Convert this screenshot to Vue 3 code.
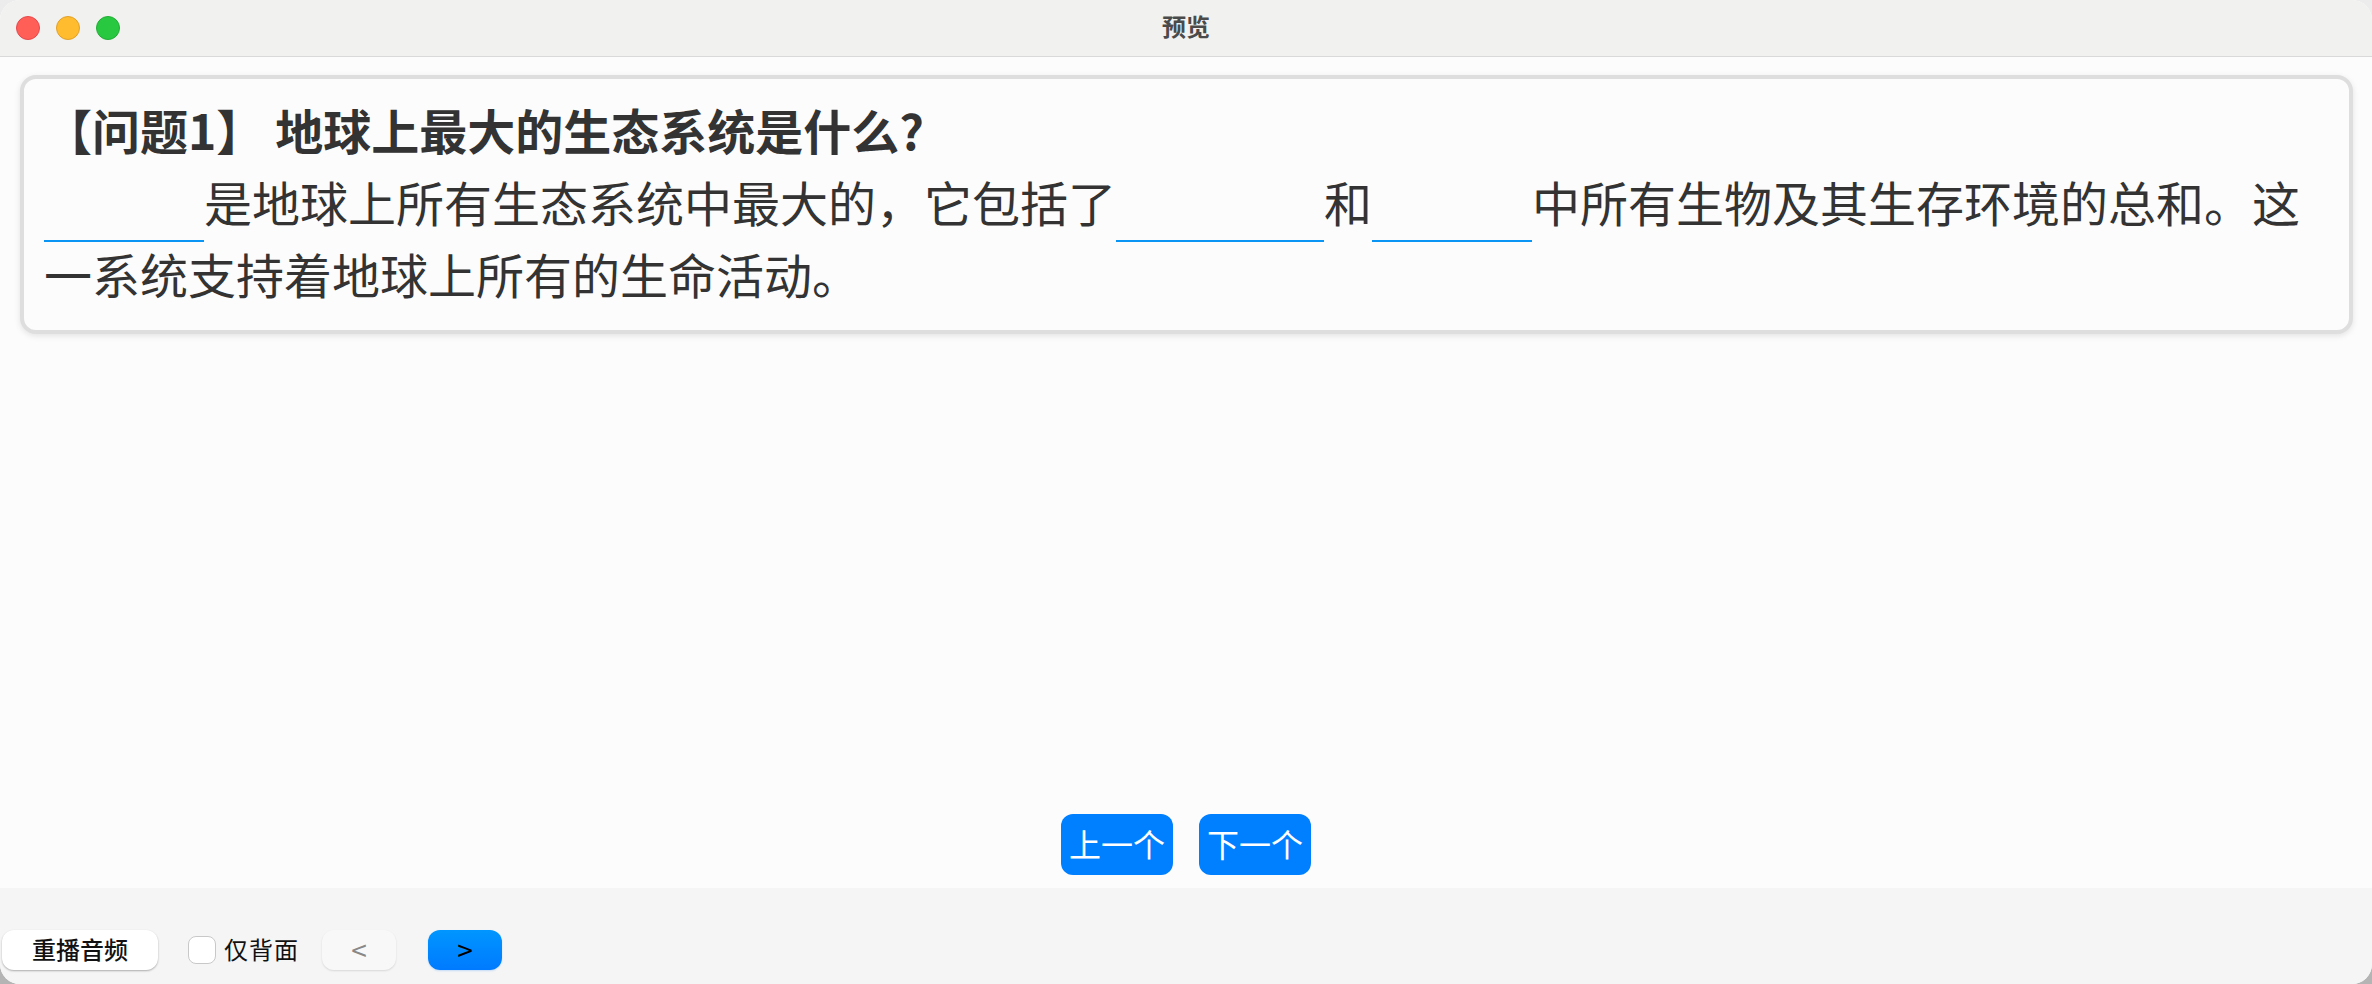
<template>
  <div class="window">
    <header class="titlebar">
      <div class="lights">
        <span class="light red"></span>
        <span class="light yellow"></span>
        <span class="light green"></span>
      </div>
      <span class="title">预览</span>
    </header>

    <main class="content">
      <section class="card">
        <div class="question">【问题1】 地球上最大的生态系统是什么?</div>
        <div class="answer">
          <span class="blank w160"></span>是地球上所有生态系统中最大的，它包括了<span class="blank w208"></span>和<span class="blank w160"></span>中所有生物及其生存环境的总和。这一系统支持着地球上所有的生命活动。
        </div>
      </section>

      <div class="nav">
        <button class="nav-btn">上一个</button>
        <button class="nav-btn">下一个</button>
      </div>
    </main>

    <footer class="footer">
      <button class="btn replay">重播音频</button>
      <label class="check">
        <span class="box"></span>
        <span class="check-text">仅背面</span>
      </label>
      <button class="btn arrow prev">&lt;</button>
      <button class="btn arrow next">&gt;</button>
    </footer>
  </div>
</template>

<script setup>
</script>

<style>
html,
body {
  margin: 0;
  background: linear-gradient(#ececec 50%, #b4b4b4 50%);
}
</style>

<style scoped>
.window {
  display: flex;
  flex-direction: column;
  height: 984px;
  overflow: hidden;
  border-radius: 20px;
  background: #fcfcfc;
  font-family: "Noto Sans CJK SC", "Noto Sans", sans-serif;
  color: #333;
}

.titlebar {
  position: relative;
  display: flex;
  align-items: center;
  justify-content: center;
  flex: none;
  height: 56px;
  background: #f1f1ef;
  border-bottom: 1px solid #d9d9d9;
}

.lights {
  position: absolute;
  left: 16px;
  top: 16px;
  display: flex;
  gap: 16px;
}

.light {
  width: 24px;
  height: 24px;
  box-sizing: border-box;
  border-radius: 50%;
}

.red {
  background: #ff5f57;
  border: 1px solid #e5484d;
}

.yellow {
  background: #febc2e;
  border: 1px solid #e0a02a;
}

.green {
  background: #28c840;
  border: 1px solid #22ad36;
}

.title {
  font-size: 24px;
  font-weight: 700;
  color: #4a4a4a;
  margin-top: -5px;
}

.content {
  flex: 1;
  display: flex;
  flex-direction: column;
  min-height: 0;
  padding: 18px 19px 13px 20px;
}

.card {
  box-sizing: border-box;
  height: 259px;
  padding: 20px 20px 0;
  border: 4px solid #dedede;
  border-radius: 16px;
  background: #fcfcfc;
  box-shadow: 0 2px 6px rgba(0, 0, 0, 0.1);
  font-size: 48px;
  line-height: 72px;
}

.question {
  margin-bottom: 6px;
  line-height: 60px;
  font-weight: 700;
}

.blank {
  display: inline-block;
  height: 30px;
  margin-bottom: -20px;
  border-bottom: 2px solid #0a95f5;
}

.w160 {
  width: 160px;
}

.w208 {
  width: 208px;
}

.nav {
  display: flex;
  justify-content: center;
  gap: 26px;
  margin-top: auto;
  padding-right: 1px;
}

.nav-btn {
  width: 112px;
  height: 61px;
  padding: 0 0 3px;
  border: none;
  border-radius: 12px;
  background: #007fff;
  color: #fff;
  font-family: inherit;
  font-size: 32px;
}

.footer {
  display: flex;
  align-items: center;
  flex: none;
  box-sizing: border-box;
  height: 96px;
  padding: 42px 0 14px 2px;
  background: #f5f5f5;
}

.btn {
  height: 40px;
  padding: 0 0 3px;
  border: none;
  border-radius: 12px;
  font-family: inherit;
}

.replay {
  width: 156px;
  background: #fff;
  color: #111;
  font-size: 24px;
  font-weight: 500;
  box-shadow: 0 1px 2px rgba(0, 0, 0, 0.3);
}

.check {
  display: flex;
  align-items: center;
  gap: 8px;
  margin-left: 30px;
  font-size: 24px;
  color: #111;
}

.check-text {
  margin-top: -3px;
  letter-spacing: 1px;
}

.box {
  box-sizing: border-box;
  width: 28px;
  height: 28px;
  border: 1px solid #c8c8c8;
  border-radius: 8px;
  background: #fff;
}

.arrow {
  width: 74px;
  font-size: 28px;
  line-height: 1;
}

.prev {
  margin-left: 23px;
  background: #f8f8f8;
  color: #888;
  box-shadow: 0 1px 2px rgba(0, 0, 0, 0.12);
}

.next {
  margin-left: 32px;
  background: linear-gradient(#0096ff, #007aff);
  color: #000;
  box-shadow: 0 1px 2px rgba(0, 122, 255, 0.2);
}
</style>
